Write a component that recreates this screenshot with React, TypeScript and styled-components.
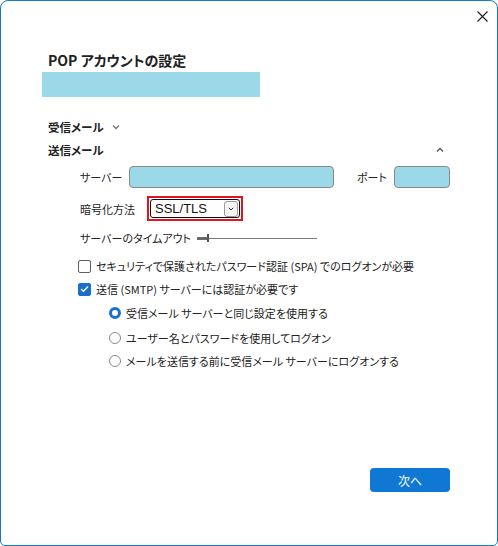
import React from 'react';
import styled, { createGlobalStyle } from 'styled-components';

const GlobalStyle = createGlobalStyle`
  html, body {
    margin: 0;
    padding: 0;
    background: #ffffff;
  }
  body {
    font-family: "Noto Sans CJK JP", "Noto Sans", sans-serif;
    font-size: 11px;
    color: #1b1b1b;
    font-feature-settings: "palt";
  }
`;

const ChevronDown = () => (
  <svg width="8" height="6" viewBox="0 0 8 6">
    <path d="M1 1.5 L4 4.5 L7 1.5" fill="none" stroke="#777" strokeWidth="1.3" />
  </svg>
);

const ChevronUp = () => (
  <svg width="8" height="6" viewBox="0 0 8 6">
    <path d="M1 4.5 L4 1.5 L7 4.5" fill="none" stroke="#555" strokeWidth="1.3" />
  </svg>
);

const App = () => {
  return (
    <>
      <GlobalStyle />
      <Window>
        <TitleBar>
          <CloseButton aria-label="close">
            <svg width="11" height="11" viewBox="0 0 11 11">
              <path d="M0.5 0.5 L10.5 10.5 M10.5 0.5 L0.5 10.5" stroke="#1b1b1b" strokeWidth="1.1" />
            </svg>
          </CloseButton>
        </TitleBar>
        <Body>
          <Title>POP アカウントの設定</Title>
          <AccountBar />

          <SectionHeader $top={19}>
            <span>受信メール</span>
            <ChevronDown />
          </SectionHeader>
          <SectionHeader $top={1} $spread>
            <span>送信メール</span>
            <ChevronUp />
          </SectionHeader>

          <Row $top={5} $indent={32} $height={22}>
            <Label $width={49}>サーバー</Label>
            <TextBox $width={205} />
            <Label $width={37} style={{ marginLeft: 23 }}>ポート</Label>
            <TextBox $width={56} />
          </Row>

          <Row $top={8} $indent={32} $height={25}>
            <Label $width={67}>暗号化方法</Label>
            <Highlight>
              <Select>
                <SelectText>SSL/TLS</SelectText>
                <SelectButton>
                  <svg width="6" height="4" viewBox="0 0 6 4">
                    <path d="M0.8 0.8 L3 3 L5.2 0.8" fill="none" stroke="#333" strokeWidth="1" />
                  </svg>
                </SelectButton>
              </Select>
            </Highlight>
          </Row>

          <Row $top={7} $indent={32} $height={20}>
            <Label $width={117}>サーバーのタイムアウト</Label>
            <Slider>
              <SliderFill />
              <SliderThumb />
            </Slider>
          </Row>

          <Row $top={8} $indent={30} $height={20}>
            <CheckBox />
            <OptionText>セキュリティで保護されたパスワード認証 (SPA) でのログオンが必要</OptionText>
          </Row>
          <Row $top={3} $indent={30} $height={20}>
            <CheckBox $checked>
              <svg width="9" height="8" viewBox="0 0 9 8">
                <path d="M1 4 L3.5 6.3 L8 1.5" fill="none" stroke="#fff" strokeWidth="1.4" />
              </svg>
            </CheckBox>
            <OptionText>送信 (SMTP) サーバーには認証が必要です</OptionText>
          </Row>

          <Row $top={4} $indent={61} $height={20}>
            <Radio $selected />
            <OptionText>受信メール サーバーと同じ設定を使用する</OptionText>
          </Row>
          <Row $top={5} $indent={61} $height={20}>
            <Radio />
            <OptionText>ユーザー名とパスワードを使用してログオン</OptionText>
          </Row>
          <Row $top={3} $indent={61} $height={20}>
            <Radio />
            <OptionText>メールを送信する前に受信メール サーバーにログオンする</OptionText>
          </Row>

          <Footer>
            <PrimaryButton>次へ</PrimaryButton>
          </Footer>
        </Body>
      </Window>
    </>
  );
};

export default App;

const Window = styled.div`
  box-sizing: border-box;
  width: 498px;
  height: 546px;
  border: 1px solid #1677d2;
  border-radius: 8px 8px 5px 5px;
  background: #ffffff;
  display: flex;
  flex-direction: column;
  overflow: hidden;
`;

const TitleBar = styled.div`
  height: 30px;
  display: flex;
  justify-content: flex-end;
  align-items: center;
  padding-right: 9px;
`;

const CloseButton = styled.button`
  border: none;
  background: transparent;
  padding: 0;
  width: 11px;
  height: 11px;
  display: flex;
`;

const Body = styled.div`
  flex: 1;
  display: flex;
  flex-direction: column;
  padding: 0 47px 53px 47px;
`;

const Title = styled.div`
  margin-top: 19px;
  height: 20px;
  line-height: 20px;
  font-size: 14px;
  font-weight: 700;
  color: #202020;
`;

const AccountBar = styled.div`
  margin-top: 2px;
  margin-left: -6px;
  width: 218px;
  height: 25px;
  background: #9cd9e8;
`;

const SectionHeader = styled.div<{ $top: number; $spread?: boolean }>`
  margin-top: ${(p) => p.$top}px;
  height: 22px;
  display: flex;
  align-items: center;
  gap: 8px;
  justify-content: ${(p) => (p.$spread ? 'space-between' : 'flex-start')};
  padding-right: ${(p) => (p.$spread ? '6px' : '0')};
  font-weight: 700;
  font-size: 11.5px;
  color: #222;
`;

const Row = styled.div<{ $top: number; $indent: number; $height: number }>`
  margin-top: ${(p) => p.$top}px;
  padding-left: ${(p) => p.$indent}px;
  height: ${(p) => p.$height}px;
  display: flex;
  align-items: center;
`;

const Label = styled.span<{ $width: number }>`
  width: ${(p) => p.$width}px;
  flex-shrink: 0;
  white-space: nowrap;
  color: #222;
`;

const TextBox = styled.div<{ $width: number }>`
  box-sizing: border-box;
  width: ${(p) => p.$width}px;
  height: 22px;
  background: #9cd9e8;
  border: 1px solid #8a8a8a;
  border-radius: 4px;
`;

const Highlight = styled.div`
  box-sizing: border-box;
  width: 96px;
  height: 25px;
  border: 2px solid #e3141f;
  padding: 1px;
  display: flex;
`;

const Select = styled.div`
  box-sizing: border-box;
  flex: 1;
  border: 1.5px solid #111;
  border-radius: 3px;
  display: flex;
  align-items: center;
  justify-content: space-between;
  padding: 0 1px 0 4px;
`;

const SelectText = styled.span`
  font-family: "Liberation Sans", Arial, sans-serif;
  font-size: 13px;
  color: #111;
`;

const SelectButton = styled.div`
  box-sizing: border-box;
  width: 14px;
  height: 16px;
  border: 1px solid #9a9a9a;
  border-radius: 3px;
  background: #f4f4f4;
  display: flex;
  align-items: center;
  justify-content: center;
`;

const Slider = styled.div`
  position: relative;
  width: 120px;
  height: 10px;
  display: flex;
  align-items: center;
  &::before {
    content: '';
    flex: 1;
    height: 1px;
    background: #7a7a7a;
  }
`;

const SliderFill = styled.div`
  position: absolute;
  left: 0;
  top: 4px;
  width: 11px;
  height: 3px;
  background: #6a6a6a;
`;

const SliderThumb = styled.div`
  position: absolute;
  left: 10px;
  top: 1px;
  width: 2px;
  height: 8px;
  background: #555;
`;

const CheckBox = styled.div<{ $checked?: boolean }>`
  box-sizing: border-box;
  width: 13px;
  height: 13px;
  flex-shrink: 0;
  border-radius: 2px;
  border: 1px solid ${(p) => (p.$checked ? '#1a6fc9' : '#5f5f5f')};
  background: ${(p) => (p.$checked ? '#1a6fc9' : '#fff')};
  display: flex;
  align-items: center;
  justify-content: center;
  margin-right: 5px;
`;

const Radio = styled.div<{ $selected?: boolean }>`
  box-sizing: border-box;
  width: 12px;
  height: 12px;
  flex-shrink: 0;
  border-radius: 50%;
  border: ${(p) => (p.$selected ? '3.5px solid #1a6fc9' : '1px solid #8a8a8a')};
  background: #fff;
  margin-right: 5px;
`;

const OptionText = styled.span`
  white-space: nowrap;
  color: #222;
`;

const Footer = styled.div`
  margin-top: auto;
  display: flex;
  justify-content: flex-end;
`;

const PrimaryButton = styled.button`
  width: 80px;
  height: 24px;
  border: none;
  border-radius: 4px;
  background: #0f78d4;
  color: #fff;
  font-family: "Noto Sans CJK JP", sans-serif;
  font-size: 12px;
  padding: 0;
`;
